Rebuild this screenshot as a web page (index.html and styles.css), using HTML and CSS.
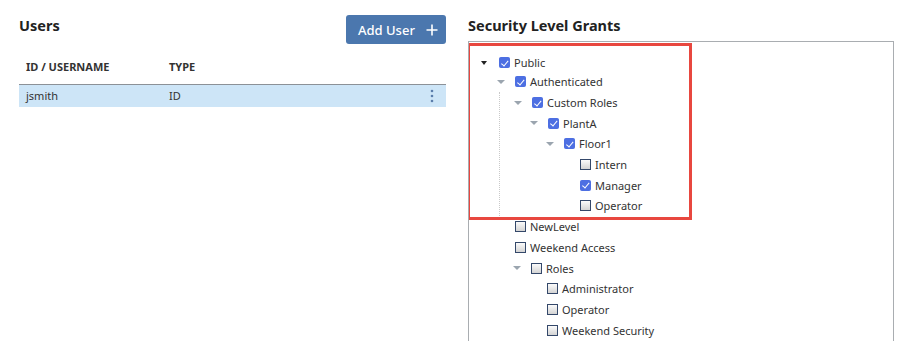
FILE: index.html
```html
<!DOCTYPE html>
<html lang="en">
<head>
    <meta charset="UTF-8">
    <meta name="viewport" content="width=device-width, initial-scale=1.0">
    <title>Users</title>
    <link rel="stylesheet" href="styles.css">
</head>
<body>
    <main class="page">
        <section class="users">
            <div class="usersHead">
                <h2 class="title">Users</h2>
                <button class="addBtn">Add User
                    <svg width="12" height="12" viewBox="0 0 12 12"><path d="M6 0.5V11.5M0.5 6H11.5" stroke="#fff" stroke-width="1.6" fill="none"/></svg>
                </button>
            </div>

            <table class="usersTable">
                <thead>
                    <tr>
                        <th class="colName">ID / Username</th>
                        <th>Type</th>
                        <th class="colMenu"></th>
                    </tr>
                </thead>
                <tbody>
                    <tr class="selected">
                        <td>jsmith</td>
                        <td>ID</td>
                        <td class="colMenu">
                            <svg width="4" height="14" viewBox="0 0 4 14"><circle cx="2" cy="2" r="1.3"/><circle cx="2" cy="7" r="1.3"/><circle cx="2" cy="12" r="1.3"/></svg>
                        </td>
                    </tr>
                </tbody>
            </table>
        </section>

        <section class="grants">
            <h2 class="title">Security Level Grants</h2>
            <div class="treeBox">
                <!-- highlight frame drawn over the tree -->
                <div class="highlight"></div>
                <ul class="tree">
                    <li>
                        <div class="node first"><span class="toggle open dark"></span><span class="cb on"></span><span class="label">Public</span></div>
                        <ul>
                            <li>
                                <div class="node"><span class="toggle open"></span><span class="cb on"></span><span class="label">Authenticated</span></div>
                                <ul class="guide">
                                    <li>
                                        <div class="node"><span class="toggle open"></span><span class="cb on"></span><span class="label">Custom Roles</span></div>
                                        <ul>
                                            <li>
                                                <div class="node"><span class="toggle open"></span><span class="cb on"></span><span class="label">PlantA</span></div>
                                                <ul>
                                                    <li>
                                                        <div class="node"><span class="toggle open"></span><span class="cb on"></span><span class="label">Floor1</span></div>
                                                        <ul>
                                                            <li><div class="node"><span class="toggle"></span><span class="cb"></span><span class="label">Intern</span></div></li>
                                                            <li><div class="node"><span class="toggle"></span><span class="cb on"></span><span class="label">Manager</span></div></li>
                                                            <li><div class="node"><span class="toggle"></span><span class="cb"></span><span class="label">Operator</span></div></li>
                                                        </ul>
                                                    </li>
                                                </ul>
                                            </li>
                                        </ul>
                                    </li>
                                </ul>
                            </li>
                            <li><div class="node"><span class="toggle"></span><span class="cb"></span><span class="label">NewLevel</span></div></li>
                            <li>
                                <div class="node"><span class="toggle"></span><span class="cb"></span><span class="label">Weekend Access</span></div>
                                <ul>
                                    <li>
                                        <div class="node"><span class="toggle open"></span><span class="cb"></span><span class="label">Roles</span></div>
                                        <ul>
                                            <li><div class="node"><span class="toggle"></span><span class="cb"></span><span class="label">Administrator</span></div></li>
                                            <li><div class="node"><span class="toggle"></span><span class="cb"></span><span class="label">Operator</span></div></li>
                                            <li><div class="node"><span class="toggle"></span><span class="cb"></span><span class="label">Weekend Security</span></div></li>
                                        </ul>
                                    </li>
                                </ul>
                            </li>
                        </ul>
                    </li>
                </ul>
            </div>
        </section>
    </main>
</body>
</html>
```

FILE: styles.css
```css
body{
    margin: 0;
    font-family: "Noto Sans", sans-serif;
    color: #222;
    background: #fff;
    overflow: hidden;
}

.page{
    display: flex;
    gap: 22px;
    padding: 15px 0 0 19px;
}

.title{
    margin: 0;
    font-size: 14.5px;
    line-height: 20px;
    font-weight: 700;
    color: #222;
}

/* users panel */

.users{
    width: 427px;
}

.usersHead{
    display: flex;
    justify-content: space-between;
    align-items: flex-start;
}

.addBtn{
    display: flex;
    align-items: center;
    gap: 11px;
    height: 29px;
    width: 100px;
    padding: 0 0 0 12px;
    border: none;
    border-radius: 3px;
    background: #4b77ae;
    color: #fff;
    font-family: "Noto Sans", sans-serif;
    font-size: 13px;
    font-weight: 500;
}

.usersTable{
    width: 100%;
    border-collapse: collapse;
}

.usersTable th{
    text-align: left;
    font-size: 11px;
    font-weight: 700;
    text-transform: uppercase;
    color: #333;
    line-height: 16px;
    padding: 15px 7px 9px;
    border-bottom: 1px solid #8c9197;
}

.usersTable .colName{
    width: 129px;
}

.usersTable td{
    font-size: 11px;
    line-height: 22px;
    padding: 0 7px;
    color: #333;
}

.usersTable tr.selected{
    background: #cde5f7;
}

.usersTable .colMenu{
    width: 14px;
    text-align: right;
    padding-right: 12px;
}

.colMenu svg{
    display: block;
    margin-left: auto;
    fill: #5b7dab;
}

/* grants panel */

.grants{
    width: 426px;
}

.grants .title{
    margin-bottom: 6px;
}

.treeBox{
    position: relative;
    height: 300px;
    border: 1px solid #a9adb1;
    border-bottom: none;
    padding-top: 12px;
    box-sizing: border-box;
    overflow: hidden;
}

.highlight{
    position: absolute;
    left: -2px;
    top: 1px;
    width: 225px;
    height: 177px;
    border: 3px solid #e8473f;
    box-sizing: border-box;
}

.tree, .tree ul{
    list-style: none;
    margin: 0;
    padding: 0 0 0 16px;
}

.tree{
    padding-left: 12px;
}

.tree ul.guide{
    margin-left: 2px;
    padding-left: 14px;
    border-left: 1px dotted #c9c9c9;
}

.node{
    display: flex;
    align-items: center;
    height: 20.7px;
}

.node.first{
    height: 17.5px;
}

.toggle{
    flex: none;
    width: 18px;
    height: 4px;
}

.toggle.open::before{
    content: "";
    display: block;
    width: 0;
    height: 0;
    border-left: 4px solid transparent;
    border-right: 4px solid transparent;
    border-top: 4px solid #9ba5af;
}

.toggle.open.dark::before{
    border-left-width: 3px;
    border-right-width: 3px;
    border-top-color: #222;
}

.cb{
    position: relative;
    flex: none;
    width: 11px;
    height: 11px;
    box-sizing: border-box;
    border: 1px solid #34486a;
    background: linear-gradient(#fbfbfb, #d4d4d4);
}

.cb.on{
    border-color: #4d6fe2;
    border-radius: 1.5px;
    background: #4d6fe2;
}

.cb.on::after{
    content: "";
    position: absolute;
    left: 3px;
    top: 0.5px;
    width: 2.5px;
    height: 5.5px;
    border: solid #fff;
    border-width: 0 1.6px 1.6px 0;
    transform: rotate(40deg);
}

.label{
    margin-left: 4px;
    font-size: 11px;
    color: #333;
    white-space: nowrap;
}
```
